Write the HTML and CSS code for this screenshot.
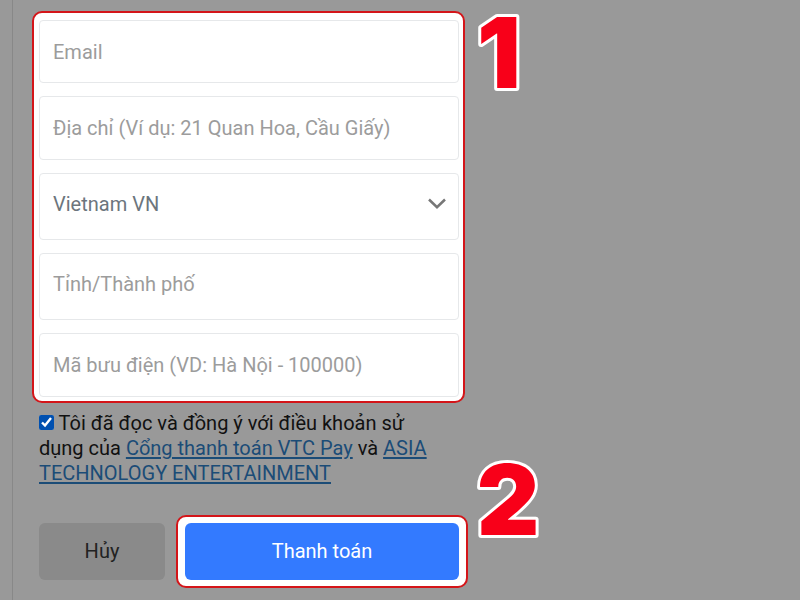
FILE: index.html
```html
<!DOCTYPE html>
<html lang="vi">
<head>
<meta charset="utf-8">
<meta name="viewport" content="width=device-width, initial-scale=1">
<title>Thanh toán</title>
<link rel="stylesheet" href="styles.css">
</head>
<body>
<main class="page">
  <form class="checkout">
    <div class="spotlight fields">
      <input class="field" type="email" placeholder="Email" aria-label="Email">
      <input class="field field-medium" type="text" placeholder="Địa chỉ (Ví dụ: 21 Quan Hoa, Cầu Giấy)" aria-label="Địa chỉ">
      <div class="select-wrap">
        <select class="field field-tall country" aria-label="Quốc gia">
          <option>Vietnam VN</option>
        </select>
        <svg class="chevron" viewBox="0 0 18 12" aria-hidden="true"><path d="M1 1.500 9 9.200l8-7.700"/></svg>
      </div>
      <input class="field field-tall" type="text" placeholder="Tỉnh/Thành phố" aria-label="Tỉnh/Thành phố">
      <input class="field field-medium" type="text" placeholder="Mã bưu điện (VD: Hà Nội - 100000)" aria-label="Mã bưu điện">
      <svg class="step step-one" viewBox="0 0 72 84"><text x="36" y="77">1</text></svg>
    </div>
    <div class="terms">
      <input class="check" type="checkbox" id="agree" checked>
      <label for="agree">Tôi đã đọc và đồng ý với điều khoản sử dụng của <a href="#">Cổng thanh toán VTC Pay</a> và <a href="#">ASIA TECHNOLOGY ENTERTAINMENT</a></label>
    </div>
    <div class="actions">
      <button class="button cancel" type="button">Hủy</button>
      <div class="spotlight pay-frame">
        <button class="button pay" type="button">Thanh toán</button>
        <svg class="step step-two" viewBox="0 0 72 84"><text x="36" y="77">2</text></svg>
      </div>
    </div>
  </form>
</main>
</body>
</html>
```

FILE: styles.css
```css
* {
  box-sizing: border-box;
}

body {
  margin: 0;
  background: #999;
  color: #111;
  font-family: Roboto, "Liberation Sans", sans-serif;
  font-size: 20px;
  line-height: 25px;
}

.page {
  min-height: 100vh;
  margin-left: 12px;
  padding: 11px 0 12px 19px;
  border-left: 1px solid #888;
}

.checkout {
  max-width: 436px;
}

.spotlight {
  position: relative;
  border: 2px solid #d41519;
  border-radius: 10px;
  background: #fff;
}

.fields {
  display: flex;
  flex-direction: column;
  gap: 13px;
  margin-right: 3px;
  padding: 7px 4px 4px 5px;
}

.field {
  display: block;
  width: 100%;
  height: 63px;
  padding: 0 13px;
  border: 1px solid #e6e8ea;
  border-radius: 4px;
  background: #fff;
  color: #6c757d;
  font: inherit;
}

.field::placeholder {
  color: #9c9c9c;
  opacity: 1;
}

.field-medium {
  height: 64px;
}

.field-tall {
  height: 67px;
  padding-bottom: 5px;
}

.select-wrap {
  position: relative;
}

.country {
  appearance: none;
}

.chevron {
  position: absolute;
  top: 25px;
  right: 13px;
  width: 18px;
  height: 12px;
  fill: none;
  stroke: #777;
  stroke-width: 2.5;
  pointer-events: none;
}

.terms {
  margin: 8px 24px 0 7px;
}

.check {
  width: 15px;
  height: 15px;
  margin: 0;
  accent-color: #0050b0;
  vertical-align: 0;
}

.terms a {
  color: #1b4c77;
  text-decoration-thickness: 2px;
  text-underline-offset: 2px;
}

.actions {
  display: flex;
  align-items: center;
  gap: 11px;
  margin-top: 29px;
  padding-left: 7px;
}

.button {
  height: 57px;
  border: 0;
  border-radius: 6px;
  font: inherit;
}

.cancel {
  flex: 0 0 126px;
  background: #8a8a8a;
  color: #222;
}

.pay-frame {
  flex: 1;
  padding: 6px 7px;
}

.pay {
  display: block;
  width: 100%;
  background: #337aff;
  color: #fff;
}

.step {
  position: absolute;
  width: 72px;
  height: 84px;
  overflow: visible;
  fill: #f80019;
  stroke: #fff;
  stroke-width: 6px;
  stroke-linejoin: round;
  paint-order: stroke;
  font-family: Inter, "Liberation Sans", sans-serif;
  font-size: 97px;
  font-weight: 900;
  text-anchor: middle;
}

.step-one {
  top: -2px;
  left: 100%;
}

.step-two {
  bottom: 44px;
  left: calc(100% + 6px);
}
```
